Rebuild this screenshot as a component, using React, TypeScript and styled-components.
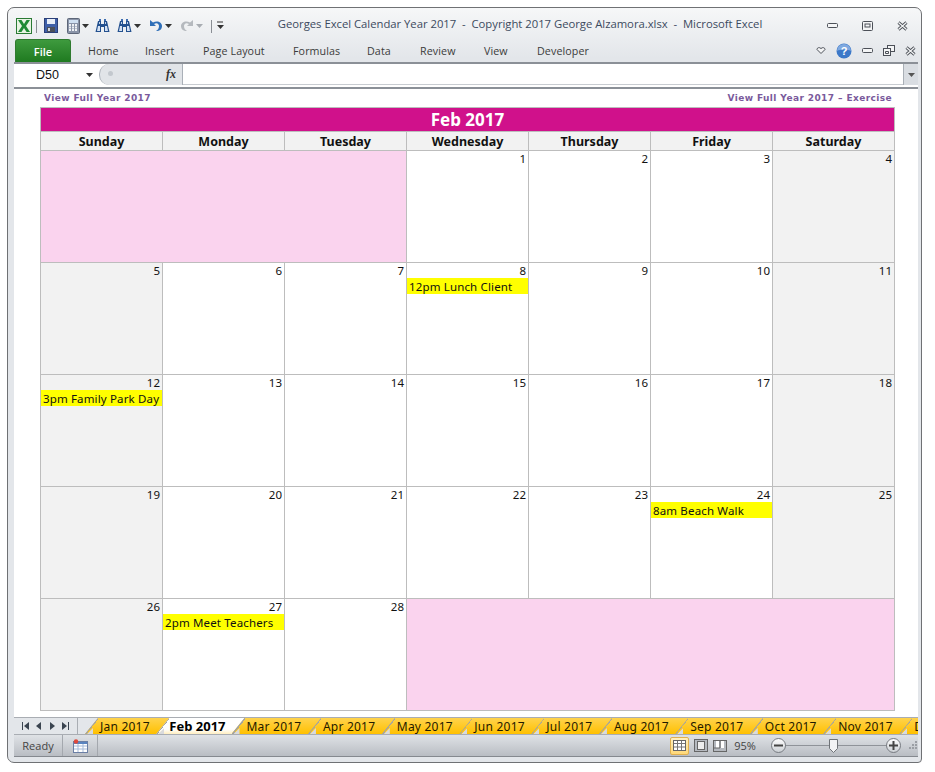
import React from "react";
import styled, { createGlobalStyle } from "styled-components";

const GlobalStyle = createGlobalStyle`
  html, body { margin: 0; padding: 0; background: #fff; }
  body { width: 935px; height: 772px; overflow: hidden; font-family: "Open Sans", "Liberation Sans", sans-serif; }
`;

const DAYS = ["Sunday", "Monday", "Tuesday", "Wednesday", "Thursday", "Friday", "Saturday"];
const SHEETS = [
  "Jan 2017", "Feb 2017", "Mar 2017", "Apr 2017", "May 2017", "Jun 2017",
  "Jul 2017", "Aug 2017", "Sep 2017", "Oct 2017", "Nov 2017", "D",
];
const TABS = ["Home", "Insert", "Page Layout", "Formulas", "Data", "Review", "View", "Developer"];
const RIBBON_WIDTHS = [57, 58, 90, 74, 53, 64, 53, 70];

type Cell = { day?: number; span?: number; weekend?: boolean; event?: string };

const CELLS: Cell[] = [
  { span: 3 },
  { day: 1 },
  { day: 2 },
  { day: 3 },
  { day: 4, weekend: true },
  { day: 5, weekend: true },
  { day: 6 },
  { day: 7 },
  { day: 8, event: "12pm Lunch Client" },
  { day: 9 },
  { day: 10 },
  { day: 11, weekend: true },
  { day: 12, weekend: true, event: "3pm Family Park Day" },
  { day: 13 },
  { day: 14 },
  { day: 15 },
  { day: 16 },
  { day: 17 },
  { day: 18, weekend: true },
  { day: 19, weekend: true },
  { day: 20 },
  { day: 21 },
  { day: 22 },
  { day: 23 },
  { day: 24, event: "8am Beach Walk" },
  { day: 25, weekend: true },
  { day: 26, weekend: true },
  { day: 27, event: "2pm Meet Teachers" },
  { day: 28 },
  { span: 4 },
];

const Page = styled.div`
  padding: 7px 13px 9px 7px;
  height: 772px;
  box-sizing: border-box;
`;

const Window = styled.div`
  height: 756px;
  box-sizing: border-box;
  border: 1px solid #6f7174;
  border-radius: 7px 7px 4px 7px;
  background: linear-gradient(#f6f7f8 0, #e3e6ea 50px, #e3e6ea 100%);
  padding: 0 2px 5px 6px;
  display: flex;
  flex-direction: column;
`;

const TitleBar = styled.div`
  height: 31px;
  display: flex;
  align-items: center;
  flex: none;
`;

const QuickAccess = styled.div`
  width: 222px;
  flex: none;
  display: flex;
  align-items: center;
  padding: 4px 0 0 2px;
  box-sizing: border-box;
  height: 100%;
`;

const Gap = styled.span<{ $w: number }>`
  width: ${(p) => p.$w}px;
  flex: none;
`;

const Title = styled.div`
  width: 568px;
  flex: none;
  text-align: center;
  font-size: 11.3px;
  color: #3c4a5e;
  white-space: pre;
  letter-spacing: -0.02px;
`;

const WindowButtons = styled.div`
  margin-left: 23px;
  display: flex;
  align-items: center;
  gap: 24px;
  padding-top: 4px;
`;

const RibbonRow = styled.div`
  height: 23px;
  flex: none;
  display: flex;
  align-items: stretch;
  font-size: 10.7px;
  color: #3b3b3b;
`;

const FileTab = styled.div`
  width: 56px;
  margin-left: 1px;
  box-sizing: border-box;
  border: 1px solid #2f7a2f;
  border-bottom: none;
  border-radius: 3px 3px 0 0;
  background: linear-gradient(#3e9a3e, #1f7a20);
  color: #fff;
  display: flex;
  align-items: center;
  justify-content: center;
  font-size: 11px;
  font-weight: 600;
`;

const TabList = styled.div`
  display: flex;
  align-items: center;
  padding-left: 17px;
`;

const RibbonTab = styled.div<{ $width: number }>`
  width: ${(p) => p.$width}px;
  text-align: left;
  letter-spacing: 0.1px;
`;

const RibbonRight = styled.div`
  margin-left: auto;
  display: flex;
  align-items: center;
  gap: 10px;
  padding-right: 3px;
`;

const FormulaBar = styled.div`
  height: 27px;
  flex: none;
  border-top: 2px solid #8b9097;
  border-bottom: 2px solid #8b9097;
  margin-right: 1px;
  box-sizing: border-box;
  display: flex;
  background: #fff;
`;

const NameBox = styled.div`
  width: 85px;
  flex: none;
  display: flex;
  align-items: center;
  justify-content: space-between;
  box-sizing: border-box;
  padding: 0 4px 0 22px;
  font-size: 12.5px;
  color: #111;
  font-family: "Liberation Sans", sans-serif;
  height: 21px;
`;

const FxBox = styled.div`
  position: relative;
  width: 84px;
  flex: none;
  height: 21px;
  box-sizing: border-box;
  background: #e1e4e8;
  border-right: 1px solid #aab0b8;
  border-left: 1px solid #aab0b8;
  border-radius: 10px 0 0 10px;
  display: flex;
  align-items: center;
  justify-content: flex-end;
  padding-right: 6px;
  font-family: "Liberation Serif", serif;
  font-style: italic;
  font-weight: 700;
  font-size: 12px;
  color: #333;

  &::before {
    content: "";
    position: absolute;
    left: 8px;
    top: 7px;
    width: 5px;
    height: 5px;
    border-radius: 50%;
    background: #c3c8ce;
  }
`;

const FormulaInput = styled.div`
  flex: 1;
  height: 21px;
  border-bottom: 1px solid #c8ccd1;
  box-sizing: border-box;
`;

const FormulaExpand = styled.div`
  width: 15px;
  height: 21px;
  box-sizing: border-box;
  background: #d9dde2;
  border-left: 1px solid #a9afb6;
  display: flex;
  align-items: center;
  justify-content: center;
`;

const Sheet = styled.div`
  flex: 1;
  min-height: 0;
  background: #fff;
  margin-right: 1px;
  padding: 1px 0 0 26px;
  box-sizing: border-box;
  overflow: hidden;
`;

const LinkRow = styled.div`
  width: 855px;
  height: 17px;
  display: flex;
  justify-content: space-between;
  padding: 0 3px 0 4px;
  box-sizing: border-box;
  font-family: "DejaVu Sans", "Liberation Sans", sans-serif;
  font-size: 9px;
  font-weight: 700;
  line-height: 17px;
  letter-spacing: 0.4px;
  color: #7a5a9c;
`;

const Calendar = styled.div`
  width: 855px;
  box-sizing: border-box;
  border: 1px solid #bdbdbd;
  border-bottom: none;
  border-right: none;
`;

const MonthBar = styled.div`
  height: 24px;
  background: #d0118b;
  color: #fff;
  font-family: "Noto Sans", sans-serif;
  font-weight: 700;
  font-size: 17px;
  line-height: 24px;
  text-align: center;
  border-right: 1px solid #bdbdbd;
  border-bottom: 1px solid #bdbdbd;
  box-sizing: border-box;
`;

const Grid = styled.div`
  display: grid;
  grid-template-columns: repeat(7, 122px);
`;

const DayHead = styled.div`
  height: 19px;
  box-sizing: border-box;
  background: #f2f2f2;
  border-right: 1px solid #bdbdbd;
  border-bottom: 1px solid #bdbdbd;
  text-align: center;
  font-family: "Noto Sans", sans-serif;
  font-weight: 700;
  font-size: 12.5px;
  line-height: 19px;
  color: #111;
`;

const DayCell = styled.div<{ $span?: number; $weekend?: boolean }>`
  grid-column: span ${(p) => p.$span ?? 1};
  height: 112px;
  box-sizing: border-box;
  background: ${(p) => (p.$span ? "#fad3ee" : p.$weekend ? "#f2f2f2" : "#fff")};
  border-right: 1px solid #bdbdbd;
  border-bottom: 1px solid #bdbdbd;
  font-family: "Noto Sans", sans-serif;
  font-size: 11.5px;
  color: #111;
`;

const DayNumber = styled.div`
  height: 15px;
  line-height: 16px;
  text-align: right;
  padding-right: 2px;
`;

const EventLabel = styled.div`
  height: 16px;
  line-height: 18px;
  padding-left: 2px;
  background: #ffff00;
  white-space: nowrap;
  overflow: hidden;
  letter-spacing: 0.15px;
`;

const TabStrip = styled.div`
  height: 17px;
  flex: none;
  display: flex;
  margin-right: 1px;
  background: #e3e6ea;
  border-top: 1px solid #a9adb3;
  box-sizing: border-box;
  overflow: hidden;
`;

const TabNav = styled.div`
  width: 64px;
  flex: none;
  display: flex;
  align-items: center;
  justify-content: space-around;
  padding: 0 5px;
  box-sizing: border-box;
  border-right: 1px solid #a9adb3;
`;

const SheetTabs = styled.div`
  display: flex;
  padding-left: 7px;
`;

const SheetTab = styled.div<{ $active?: boolean }>`
  position: relative;
  flex: none;
  margin-right: -13px;
  box-sizing: border-box;
  padding: ${(p) => (p.$active ? "0 19px 0 13px" : "0 19.5px 0 15px")};
  height: 16px;
  line-height: 17px;
  font-family: "Noto Sans", sans-serif;
  font-size: ${(p) => (p.$active ? 13 : 12)}px;
  font-weight: ${(p) => (p.$active ? 700 : 400)};
  letter-spacing: ${(p) => (p.$active ? 0 : 0.22)}px;
  color: ${(p) => (p.$active ? "#000" : "#1f1a00")};
  white-space: nowrap;
  background: ${(p) =>
    p.$active ? "linear-gradient(#fff 70%, #ffeec0)" : "linear-gradient(#ffd34d, #ffc000)"};
  clip-path: polygon(0 100%, 13px 0, 100% 0, 100% 100%);

  &::before {
    content: "";
    position: absolute;
    left: 0;
    top: 0;
    width: 13px;
    height: 16px;
    background: linear-gradient(to bottom right, transparent 45%, #a2a2a2 45%, #a2a2a2 55%, transparent 55%);
  }

  &::after {
    content: "";
    position: absolute;
    left: 2px;
    bottom: 0;
    width: 6px;
    height: 6px;
    background: #d9dadc;
    clip-path: polygon(0 100%, 100% 0, 100% 100%);
  }
`;

const StatusBar = styled.div`
  height: 23px;
  flex: none;
  margin-right: 1px;
  box-sizing: border-box;
  border-top: 1px solid #a9adb3;
  border-bottom: 1px solid #85898f;
  background: linear-gradient(#dfe2e6, #b9bdc3);
  display: flex;
  align-items: center;
  font-size: 11px;
  color: #444;
`;

const StatusCell = styled.div<{ $width: number }>`
  width: ${(p) => p.$width}px;
  height: 100%;
  flex: none;
  display: flex;
  align-items: center;
  justify-content: center;
  box-sizing: border-box;
  border-right: 1px solid #a4a8ae;
`;

const StatusRight = styled.div`
  margin-left: auto;
  display: flex;
  align-items: center;
  height: 100%;
`;

const ViewButton = styled.div<{ $active?: boolean }>`
  width: 19px;
  height: 18px;
  margin-right: ${(p) => (p.$active ? 2 : 0)}px;
  box-sizing: border-box;
  display: flex;
  align-items: center;
  justify-content: center;
  border-radius: 2px;
  border: 1px solid ${(p) => (p.$active ? "#e0b050" : "transparent")};
  background: ${(p) => (p.$active ? "linear-gradient(#fff0c0, #ffd878)" : "transparent")};
`;

const ZoomText = styled.div`
  width: 32px;
  margin-right: 10px;
  text-align: center;
  font-size: 11px;
  color: #444;
`;

const ZoomSlider = styled.div`
  position: relative;
  width: 130px;
  height: 17px;
  margin-right: 6px;
`;

const SliderLine = styled.div`
  position: absolute;
  left: 14px;
  right: 14px;
  top: 8px;
  height: 1px;
  background: #8f9399;
`;

const ZoomRound = styled.div<{ $side: "left" | "right" }>`
  position: absolute;
  ${(p) => p.$side}: 0;
  top: 1px;
  width: 15px;
  height: 15px;
  box-sizing: border-box;
  border: 1px solid #777b81;
  border-radius: 50%;
  background: linear-gradient(#fdfdfd, #ccd0d5);
  display: flex;
  align-items: center;
  justify-content: center;
`;

const SliderThumb = styled.svg`
  position: absolute;
  left: 58px;
  top: 2px;
`;

const CaretSvg = styled.svg`
  margin: 0 2px;
  flex: none;
`;

const ExcelIcon = () => (
  <svg width="16" height="16" viewBox="0 0 16 16">
    <rect x="0.5" y="0.5" width="15" height="15" fill="#e8f3e4" stroke="#2a7a34" />
    <path d="M2 2h3.500L8 6l2.500-4H14l-4 6 4 6h-3.500L8 10l-2.500 4H2l4-6z" fill="#1f8a35" />
  </svg>
);

const Divider = () => (
  <svg width="9" height="16" viewBox="0 0 9 16">
    <path d="M4.500 2v13" stroke="#8a8e94" />
  </svg>
);

const FloppyIcon = () => (
  <svg width="14" height="15" viewBox="0 0 14 15">
    <rect x="0.5" y="0.5" width="13" height="14" fill="#3e5fa8" stroke="#2b3f78" />
    <rect x="3" y="1" width="8" height="5" fill="#e8eef8" />
    <rect x="3" y="9" width="8" height="5" fill="#4a4f5a" />
    <rect x="4" y="10" width="2" height="3" fill="#cfd4dc" />
  </svg>
);

const CalcIcon = () => (
  <svg width="13" height="16" viewBox="0 0 13 16">
    <rect x="0.5" y="0.5" width="12" height="15" rx="1" fill="#8a94a8" stroke="#5d6678" />
    <rect x="2" y="2" width="9" height="3" fill="#cfe0f2" />
    {[6, 8.500, 11].map((y) =>
      [2, 5, 8].map((x) => <rect key={`${x}-${y}`} x={x} y={y} width="2" height="2" fill="#eef1f5" />)
    )}
  </svg>
);

const BinocularsIcon = () => (
  <svg width="15" height="14" viewBox="0 0 15 14">
    <path d="M3 2h3v3h3V2h3l2.500 11H9V8H6v5H.500z" fill="#24518f" />
    <path d="M3 7h2v5H2zM10 7h2l1 5h-3z" fill="#d5e2f3" />
    <path d="M4 0h2v2H4zM9 0h2v2H9z" fill="#3c6cb0" />
    <path d="M4 3h1v2H4zM10 3h1v2h-1z" fill="#bcd0ea" />
  </svg>
);

const Caret = ({ color = "#333" }: { color?: string }) => (
  <CaretSvg width="7" height="6" viewBox="0 0 7 6">
    <path d="M0 1h7L3.500 5z" fill={color} />
  </CaretSvg>
);

const UndoIcon = ({ color }: { color: string }) => (
  <svg width="14" height="13" viewBox="0 0 14 13">
    <path d="M1 1v6h6L5 5c3-2 5 0 5 2s-1 4-3 5c4 0 6-2 6-5 0-4-5-6-9-3.500z" fill={color} />
  </svg>
);

const RedoIcon = ({ color }: { color: string }) => (
  <svg width="14" height="13" viewBox="0 0 14 13">
    <path d="M13 1v6H7l2-2C6 3 4 5 4 7s1 4 3 5c-4 0-6-2-6-5 0-4 5-6 9-3.500z" fill={color} />
  </svg>
);

const CustomizeIcon = () => (
  <svg width="9" height="9" viewBox="0 0 9 9">
    <path d="M1 1h6" stroke="#333" />
    <path d="M1 4h7L4.500 8z" fill="#333" />
  </svg>
);

const MinimizeGlyph = () => (
  <svg width="11" height="6" viewBox="0 0 11 6">
    <rect x="0.5" y="0.5" width="10" height="4" rx="1" fill="#f4f5f6" stroke="#4c5058" />
  </svg>
);

const MaximizeGlyph = () => (
  <svg width="11" height="10" viewBox="0 0 11 10">
    <rect x="0.5" y="0.5" width="10" height="9" rx="1" fill="#f4f5f6" stroke="#4c5058" />
    <rect x="3" y="3" width="5" height="3" fill="none" stroke="#4c5058" />
  </svg>
);

const CloseGlyph = () => (
  <svg width="11" height="10" viewBox="0 0 11 10">
    <path d="M1.500 1.500l8 7M9.500 1.500l-8 7" stroke="#4c5058" strokeWidth="3" />
    <path d="M1.500 1.500l8 7M9.500 1.500l-8 7" stroke="#f4f5f6" strokeWidth="1.200" />
  </svg>
);

const RestoreGlyph = () => (
  <svg width="12" height="11" viewBox="0 0 12 11">
    <rect x="4.500" y="0.500" width="7" height="6" fill="#f4f5f6" stroke="#4c5058" />
    <rect x="0.500" y="3.500" width="7" height="7" fill="#f4f5f6" stroke="#4c5058" />
    <path d="M2.500 6.500h3v2h-3z" fill="none" stroke="#4c5058" />
  </svg>
);

const RibbonHeart = () => (
  <svg width="10" height="9" viewBox="0 0 10 9">
    <path d="M5 7.500L1 3.500c0-2 2.500-2.500 4-1 1.500-1.500 4-1 4 1z" fill="#f4f5f6" stroke="#4c5058" />
  </svg>
);

const HelpIcon = () => (
  <svg width="16" height="16" viewBox="0 0 16 16">
    <circle cx="8" cy="8" r="7.500" fill="#3c78c8" />
    <path d="M1 8a7 7 0 0 1 14 0c-3-2-11-2-14 0z" fill="#7fa9e0" />
    <text x="8" y="12" textAnchor="middle" fontFamily="Liberation Sans" fontWeight="700" fontSize="11" fill="#fff">?</text>
  </svg>
);

const NavIcon = ({ d }: { d: string }) => (
  <svg width="7" height="8" viewBox="0 0 7 8">
    <path d={d} fill="#3a4450" />
  </svg>
);

const MacroIcon = () => (
  <svg width="15" height="14" viewBox="0 0 15 14">
    <rect x="0.500" y="2.500" width="14" height="11" fill="#fff" stroke="#6b7fa5" />
    <rect x="1" y="3" width="13" height="2" fill="#5a84c0" />
    <path d="M1 7h13M1 10h13M5 5v8M10 5v8" stroke="#a5b9d8" />
    <circle cx="3" cy="2.500" r="2.200" fill="#e0483a" />
  </svg>
);

const GridViewIcon = () => (
  <svg width="13" height="11" viewBox="0 0 13 11">
    <rect x="0.500" y="0.500" width="12" height="10" fill="#fff" stroke="#666" />
    <path d="M4.500 1v9M8.500 1v9M1 3.500h11M1 7h11" stroke="#777" />
  </svg>
);

const PageViewIcon = () => (
  <svg width="14" height="13" viewBox="0 0 14 13">
    <rect x="0.500" y="0.500" width="13" height="12" fill="#b5b9bf" stroke="#666" />
    <rect x="3.500" y="2.500" width="7" height="8" fill="#eee" stroke="#666" />
  </svg>
);

const BreakViewIcon = () => (
  <svg width="14" height="12" viewBox="0 0 14 12">
    <rect x="0.500" y="0.500" width="13" height="11" fill="#b5b9bf" stroke="#666" />
    <rect x="3" y="1" width="3" height="7" fill="#fff" />
    <rect x="8" y="1" width="3" height="7" fill="#fff" />
    <path d="M7 1v7H1" fill="none" stroke="#666" />
  </svg>
);

const Plus = () => (
  <svg width="9" height="9" viewBox="0 0 9 9">
    <path d="M0 4.500h9M4.500 0v9" stroke="#444" strokeWidth="2" />
  </svg>
);

const Minus = () => (
  <svg width="9" height="3" viewBox="0 0 9 3">
    <path d="M0 1.500h9" stroke="#444" strokeWidth="2" />
  </svg>
);

const ResizeGrip = () => (
  <svg width="11" height="11" viewBox="0 0 11 11">
    <path d="M8 1h2v2H8zM5 4h2v2H5zM8 4h2v2H8zM2 7h2v2H2zM5 7h2v2H5zM8 7h2v2H8z" fill="#9a9ea4" />
  </svg>
);

export default function App() {
  return (
    <>
      <GlobalStyle />
      <Page>
        <Window>
          <TitleBar>
            <QuickAccess>
              <ExcelIcon />
              <Divider />
              <Gap $w={3} />
              <FloppyIcon />
              <Gap $w={9} />
              <CalcIcon />
              <Caret />
              <Gap $w={4} />
              <BinocularsIcon />
              <Gap $w={7} />
              <BinocularsIcon />
              <Caret />
              <Gap $w={6} />
              <UndoIcon color="#2f6fb8" />
              <Caret />
              <Gap $w={6} />
              <RedoIcon color="#b5b9be" />
              <Caret color="#a8acb2" />
              <Gap $w={2} />
              <Divider />
              <CustomizeIcon />
            </QuickAccess>
            <Title>{"Georges Excel Calendar Year 2017  -  Copyright 2017 George Alzamora.xlsx  -  Microsoft Excel"}</Title>
            <WindowButtons>
              <MinimizeGlyph />
              <MaximizeGlyph />
              <CloseGlyph />
            </WindowButtons>
          </TitleBar>
          <RibbonRow>
            <FileTab>File</FileTab>
            <TabList>
              {TABS.map((tab, i) => (
                <RibbonTab key={tab} $width={RIBBON_WIDTHS[i]}>
                  {tab}
                </RibbonTab>
              ))}
            </TabList>
            <RibbonRight>
              <RibbonHeart />
              <HelpIcon />
              <MinimizeGlyph />
              <RestoreGlyph />
              <CloseGlyph />
            </RibbonRight>
          </RibbonRow>
          <FormulaBar>
            <NameBox>
              D50
              <Caret />
            </NameBox>
            <FxBox>fx</FxBox>
            <FormulaInput />
            <FormulaExpand>
              <Caret color="#555" />
            </FormulaExpand>
          </FormulaBar>
          <Sheet>
            <LinkRow>
              <span>View Full Year 2017</span>
              <span>View Full Year 2017 – Exercise</span>
            </LinkRow>
            <Calendar>
              <MonthBar>Feb 2017</MonthBar>
              <Grid>
                {DAYS.map((d) => (
                  <DayHead key={d}>{d}</DayHead>
                ))}
                {CELLS.map((c, i) => (
                  <DayCell key={i} $span={c.span} $weekend={c.weekend}>
                    {c.day && <DayNumber>{c.day}</DayNumber>}
                    {c.event && <EventLabel>{c.event}</EventLabel>}
                  </DayCell>
                ))}
              </Grid>
            </Calendar>
          </Sheet>
          <TabStrip>
            <TabNav>
              <NavIcon d="M0 0h1v8H0zM7 0v8L2 4z" />
              <NavIcon d="M6 0v8L1 4z" />
              <NavIcon d="M1 0v8l5-4z" />
              <NavIcon d="M0 0v8l5-4zM6 0h1v8H6z" />
            </TabNav>
            <SheetTabs>
              {SHEETS.map((name) => (
                <SheetTab key={name} $active={name === "Feb 2017"}>
                  {name}
                </SheetTab>
              ))}
            </SheetTabs>
          </TabStrip>
          <StatusBar>
            <StatusCell $width={49}>Ready</StatusCell>
            <StatusCell $width={35}>
              <MacroIcon />
            </StatusCell>
            <StatusRight>
              <ViewButton $active>
                <GridViewIcon />
              </ViewButton>
              <ViewButton>
                <PageViewIcon />
              </ViewButton>
              <ViewButton>
                <BreakViewIcon />
              </ViewButton>
              <ZoomText>95%</ZoomText>
              <ZoomSlider>
                <SliderLine />
                <ZoomRound $side="left">
                  <Minus />
                </ZoomRound>
                <SliderThumb width="9" height="14" viewBox="0 0 9 14">
                  <path d="M0.500 0.500h8v9l-4 4-4-4z" fill="#f2f3f5" stroke="#6f7378" />
                </SliderThumb>
                <ZoomRound $side="right">
                  <Plus />
                </ZoomRound>
              </ZoomSlider>
              <ResizeGrip />
            </StatusRight>
          </StatusBar>
        </Window>
      </Page>
    </>
  );
}
